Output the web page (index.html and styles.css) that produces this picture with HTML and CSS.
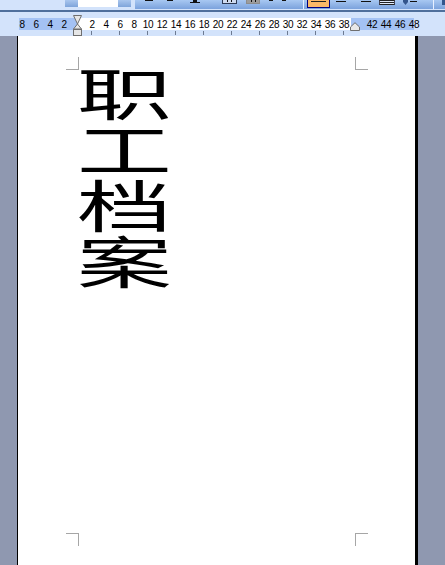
FILE: index.html
```html
<!DOCTYPE html>
<html lang="zh">
<head>
<meta charset="utf-8">
<title>职工档案</title>
<link rel="stylesheet" href="styles.css">
</head>
<body>
<div class="app">
  <div class="toolbar">
    <div class="combo combo-a"><span class="drop"></span></div>
    <div class="combo combo-b"><span class="field"></span><span class="drop"></span></div>
    <div class="bar">
      <span class="tool t-a"></span>
      <span class="tool t-b"></span>
      <span class="tool t-c"><i></i></span>
      <span class="tool t-box"><i></i><i></i></span>
      <span class="tool t-shade"><i></i><i></i></span>
      <span class="tool t-d"></span>
      <span class="tool t-d2"></span>
      <span class="sep s-1"></span>
      <span class="tool t-active"><i></i></span>
      <span class="tool t-line l-1"></span>
      <span class="tool t-line l-2"></span>
      <span class="tool t-lines"></span>
      <span class="tool t-arrow"></span>
      <span class="tool t-dash"></span>
      <span class="sep s-2"></span>
      <span class="tool t-last"></span>
    </div>
  </div>
  <div class="ruler">
    <div class="scale">
      <div class="labels">
        <span>8</span><span>6</span><span>4</span><span>2</span>
        <span class="origin"></span>
        <span>2</span><span>4</span><span>6</span><span>8</span><span>10</span><span>12</span><span>14</span><span>16</span><span>18</span><span>20</span><span>22</span><span>24</span><span>26</span><span>28</span><span>30</span><span>32</span><span>34</span><span>36</span><span>38</span>
        <span class="origin"></span>
        <span>42</span><span>44</span><span>46</span><span>48</span>
      </div>
      <div class="ticks"></div>
      <svg class="marker-left" width="9" height="21" viewBox="0 0 9 21" aria-hidden="true">
        <path d="M.5.5h8L4.5 9z" fill="#e6e6e6" stroke="#6f6f6f"/>
        <path d="M4.5 9l4 5h-8z" fill="#e6e6e6" stroke="#6f6f6f"/>
        <rect x=".5" y="14.5" width="8" height="6" fill="#e6e6e6" stroke="#6f6f6f"/>
      </svg>
      <svg class="marker-right" width="10" height="9" viewBox="0 0 10 9" aria-hidden="true">
        <path d="M5 .7L9.5 5v3.5H.5V5z" fill="#e8e8e8" stroke="#6f6f6f"/>
      </svg>
    </div>
  </div>
  <div class="workspace">
    <div class="page">
      <span class="crop tl"></span><span class="crop tr"></span><span class="crop bl"></span><span class="crop br"></span>
      <div class="title">职工档案</div>
    </div>
  </div>
</div>
</body>
</html>
```
FILE: styles.css
```css
html, body { margin: 0; padding: 0; height: 100%; overflow: hidden; }
.app { display: flex; flex-direction: column; width: 445px; height: 565px; background: #8f98b0; }

.toolbar { height: 10px; flex: none; display: flex; align-items: flex-start; background: #d3e3fb; border-bottom: 2px solid #4f6f9c; overflow: hidden; }
.combo { display: flex; height: 7px; background: #fff; }
.combo-a { margin-left: 65px; width: 16px; }
.combo-a .drop { width: 13px; }
.combo-b { width: 52px; }
.combo-b .field { width: 38px; }
.combo-b .drop { width: 13px; }
.drop { display: block; background: linear-gradient(#a9c6ee, #7ea4da); }
.bar { margin-left: 4px; flex: 1; display: flex; align-items: flex-start; height: 9px; background: linear-gradient(#a8c8f2, #7ba2dc); }
.tool { display: block; flex: none; box-sizing: border-box; }
.t-a { width: 8px; height: 1px; margin-left: 10px; background: #111; }
.t-b { width: 6px; height: 1px; margin-left: 14px; background: #111; }
.t-c { width: 10px; height: 3px; margin-left: 17px; border-bottom: 1px solid #111; }
.t-c i { display: block; width: 4px; height: 2px; margin-left: 3px; background: #111; }
.t-box, .t-shade { display: flex; justify-content: center; gap: 3px; height: 4px; border: 1px solid #2d3a55; border-top: 0; }
.t-box i, .t-shade i { display: block; width: 1px; height: 2px; background: #111; }
.t-box { width: 15px; margin-left: 22px; background: #cfdbef; }
.t-shade { width: 14px; margin-left: 9px; border-color: #8c8c8c; background: #9c9c9c; }
.t-d { width: 4px; height: 1px; margin-left: 9px; background: #111; }
.t-d2 { width: 4px; height: 1px; margin-left: 9px; background: #111; }
.sep { display: block; width: 1px; height: 9px; background: #e8f0ff; flex: none; }
.s-1 { margin-left: 17px; }
.s-2 { margin-left: 16px; }
.t-active { width: 23px; height: 8px; margin-left: 3px; background: #fbb868; border: 1px solid #000080; border-top: 0; }
.t-active i { display: block; width: 15px; height: 1px; margin: 1px 0 0 3px; background: #222; }
.t-line { width: 10px; height: 1px; margin-top: 1px; background: #111; }
.l-1 { margin-left: 6px; }
.l-2 { margin-left: 15px; }
.t-lines { width: 16px; height: 5px; margin-left: 8px; border-top: 1px solid #222; border-bottom: 1px solid #222; border-left: 1px solid #445; border-right: 1px solid #445; background: linear-gradient(#dfe8f8 1px, #222 1px, #222 2px, #dfe8f8 2px); }
.t-arrow { width: 5px; height: 5px; margin-left: 8px; background: #33558c; clip-path: polygon(0 0, 100% 0, 100% 40%, 50% 100%, 0 40%); }
.t-dash { width: 7px; height: 1px; margin: 1px 0 0 2px; background: #111; }
.t-last { width: 3px; height: 5px; margin-left: 8px; background: #33558c; }

.ruler { height: 24px; flex: none; box-sizing: border-box; padding: 6px 0 0 19px; background: #d3e3fb; }
.scale { position: relative; width: 395px; height: 18px; }
.labels { display: flex; width: 395px; height: 12px; font: 10px/13px "Liberation Sans", sans-serif; letter-spacing: -0.4px; color: #000; background: linear-gradient(90deg, #a4c2f4 58px, #fff 58px, #fff 332px, #a4c2f4 332px); }
.labels span { width: 14px; flex: none; text-align: center; }
.labels span:first-child { margin-left: -4px; }
.ticks { width: 276px; height: 4px; margin: 1px 0 0 58px; background: repeating-linear-gradient(90deg, transparent 0 14px, #6d7b92 14px 15px, transparent 15px 28px); }
.marker-left { position: absolute; left: 54px; top: -3px; display: block; }
.marker-right { position: absolute; left: 331px; top: 4px; display: block; }

.workspace { flex: 1; min-height: 0; padding-left: 17px; overflow: hidden; }
.page { position: relative; box-sizing: border-box; width: 401px; height: 100%; background: #fff; border-left: 1px solid #000; border-right: 3px solid #000; padding: 30px 0 0 58px; }
.crop { position: absolute; width: 12px; height: 12px; border: 0 solid #a6a6a6; }
.tl { left: 48px; top: 21px; border-width: 0 1px 1px 0; }
.tr { left: 337px; top: 21px; border-width: 0 0 1px 1px; }
.bl { left: 48px; top: 497px; border-width: 1px 1px 0 0; }
.br { left: 337px; top: 497px; border-width: 1px 0 0 1px; }
.title { writing-mode: vertical-rl; text-orientation: upright; width: 56px; height: 224px; font: 56px/56px "Noto Sans CJK SC", sans-serif; color: #000; white-space: nowrap; transform: scaleX(1.7); transform-origin: 0 0; }
```
